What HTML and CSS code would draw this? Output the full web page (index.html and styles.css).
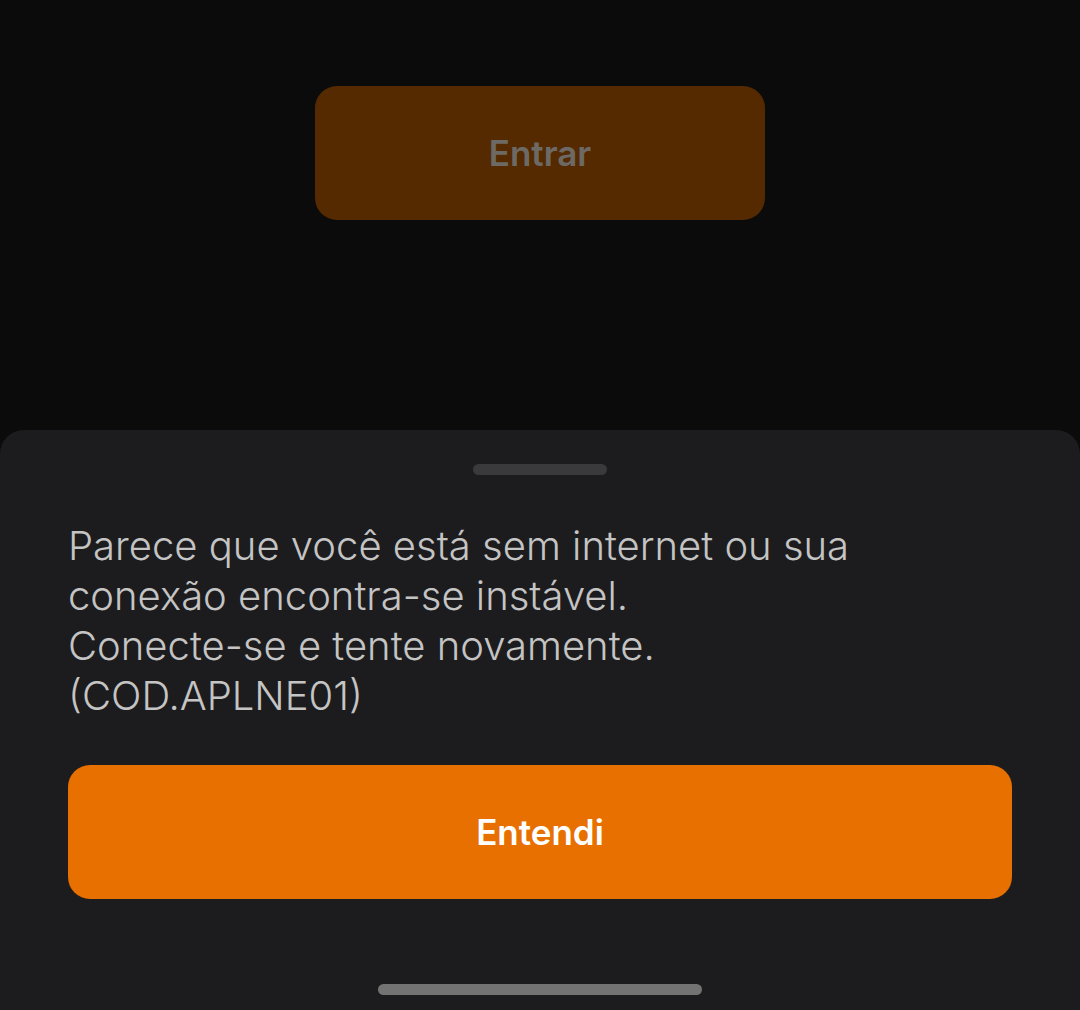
FILE: index.html
```html
<!DOCTYPE html>
<html lang="pt-BR">
<head>
    <meta charset="UTF-8">
    <meta name="viewport" content="width=device-width, initial-scale=1.0">
    <title>Entrar</title>
    <link rel="stylesheet" href="styles.css">
</head>
<body>
    <div class="screen">
        <div class="login-area">
            <button class="btn-login">Entrar</button>
        </div>

        <div class="sheet">
            <div class="sheet-handle"></div>
            <p class="sheet-message">
                Parece que você está sem internet ou sua<br>
                conexão encontra-se instável.<br>
                Conecte-se e tente novamente.<br>
                (COD.APLNE01)
            </p>
            <button class="btn-primary">Entendi</button>
            <div class="home-indicator"></div>
        </div>
    </div>
</body>
</html>
```

FILE: styles.css
```css
body {
    font-family: Inter, "Noto Sans", sans-serif;
    margin: 0;
    padding: 0;
    background-color: #0b0b0b;
}

.screen {
    height: 1010px;
    display: flex;
    flex-direction: column;
}

.login-area {
    flex: 1;
    display: flex;
    justify-content: center;
    padding-top: 86px;
}

.btn-login {
    width: 450px;
    height: 134px;
    border: none;
    border-radius: 22px;
    background-color: #552a00;
    color: #6d6a66;
    font-family: inherit;
    font-size: 35px;
    font-weight: 600;
}

.sheet {
    height: 580px;
    box-sizing: border-box;
    background-color: #1c1c1e;
    border-radius: 24px 24px 0 0;
    padding: 34px 68px 0;
    display: flex;
    flex-direction: column;
}

.sheet-handle {
    align-self: center;
    width: 134px;
    height: 11px;
    border-radius: 6px;
    background-color: #3a3a3c;
}

.sheet-message {
    margin: 46px 0 0;
    font-size: 40px;
    line-height: 50px;
    font-weight: 300;
    color: #c4c4c4;
}

.btn-primary {
    margin-top: 44px;
    height: 134px;
    border: none;
    border-radius: 22px;
    background-color: #e87000;
    color: #fff;
    font-family: inherit;
    font-size: 35px;
    font-weight: 600;
}

.home-indicator {
    align-self: center;
    margin-top: 85px;
    width: 324px;
    height: 11px;
    border-radius: 6px;
    background-color: #737373;
}
```
